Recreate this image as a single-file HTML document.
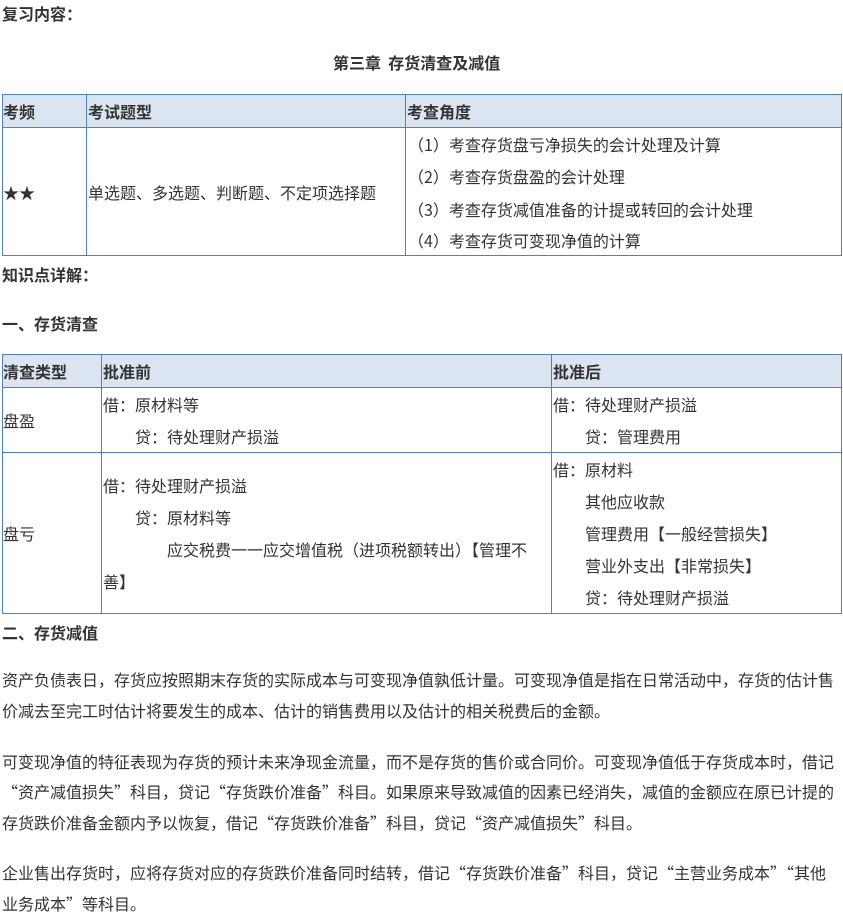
<!DOCTYPE html>
<html><head><meta charset="utf-8"><style>
body{margin:0;width:843px;height:916px;background:#fff;font-family:"Noto Sans CJK SC","Liberation Sans",sans-serif;font-size:16px;color:#333;position:relative;overflow:hidden}
.t{position:absolute;white-space:nowrap;line-height:20px}
.b{font-weight:bold}
.ln{position:absolute;background:#4f81bd}
.hd{position:absolute;background:#dbe5f1}
</style></head><body>
<div class="t b" style="left:2px;top:3px">复习内容：</div>
<div class="t b" style="left:333px;top:52px">第三章&nbsp;&nbsp;存货清查及减值</div>

<div class="hd" style="left:2px;top:94px;width:839px;height:33px"></div>
<div class="ln" style="left:2px;top:94px;width:839px;height:1px"></div>
<div class="ln" style="left:2px;top:127px;width:839px;height:1px"></div>
<div class="ln" style="left:2px;top:255px;width:839px;height:1px"></div>
<div class="ln" style="left:2px;top:94px;width:1px;height:162px"></div>
<div class="ln" style="left:86px;top:94px;width:1px;height:162px"></div>
<div class="ln" style="left:405px;top:94px;width:1px;height:162px"></div>
<div class="ln" style="left:841px;top:94px;width:1px;height:162px"></div>
<div class="t b" style="left:3px;top:101px">考频</div>
<div class="t b" style="left:88px;top:101px">考试题型</div>
<div class="t b" style="left:407px;top:101px">考查角度</div>
<div class="t" style="left:3px;top:182px">★★</div>
<div class="t" style="left:88px;top:182px">单选题、多选题、判断题、不定项选择题</div>
<div class="t" style="left:408px;top:134px">（1）考查存货盘亏净损失的会计处理及计算</div>
<div class="t" style="left:408px;top:166px">（2）考查存货盘盈的会计处理</div>
<div class="t" style="left:408px;top:199px">（3）考查存货减值准备的计提或转回的会计处理</div>
<div class="t" style="left:408px;top:230px">（4）考查存货可变现净值的计算</div>

<div class="t b" style="left:2px;top:264px">知识点详解：</div>
<div class="t b" style="left:2px;top:313px">一、存货清查</div>

<div class="hd" style="left:2px;top:354px;width:839px;height:33px"></div>
<div class="ln" style="left:2px;top:354px;width:839px;height:1px"></div>
<div class="ln" style="left:2px;top:387px;width:839px;height:1px"></div>
<div class="ln" style="left:2px;top:452px;width:839px;height:1px"></div>
<div class="ln" style="left:2px;top:613px;width:839px;height:1px"></div>
<div class="ln" style="left:2px;top:354px;width:1px;height:260px"></div>
<div class="ln" style="left:101px;top:354px;width:1px;height:260px"></div>
<div class="ln" style="left:551px;top:354px;width:1px;height:260px"></div>
<div class="ln" style="left:841px;top:354px;width:1px;height:260px"></div>
<div class="t b" style="left:3px;top:361px">清查类型</div>
<div class="t b" style="left:103px;top:361px">批准前</div>
<div class="t b" style="left:553px;top:361px">批准后</div>
<div class="t" style="left:3px;top:410px">盘盈</div>
<div class="t" style="left:103px;top:394px">借：原材料等</div>
<div class="t" style="left:135px;top:426px">贷：待处理财产损溢</div>
<div class="t" style="left:553px;top:394px">借：待处理财产损溢</div>
<div class="t" style="left:585px;top:426px">贷：管理费用</div>
<div class="t" style="left:3px;top:523px">盘亏</div>
<div class="t" style="left:103px;top:475px">借：待处理财产损溢</div>
<div class="t" style="left:135px;top:507px">贷：原材料等</div>
<div class="t" style="left:167px;top:539px">应交税费一一应交增值税（进项税额转出）【管理不</div>
<div class="t" style="left:103px;top:571px">善】</div>
<div class="t" style="left:553px;top:459px">借：原材料</div>
<div class="t" style="left:585px;top:491px">其他应收款</div>
<div class="t" style="left:585px;top:523px">管理费用【一般经营损失】</div>
<div class="t" style="left:585px;top:555px">营业外支出【非常损失】</div>
<div class="t" style="left:585px;top:587px">贷：待处理财产损溢</div>

<div class="t b" style="left:2px;top:622px">二、存货减值</div>
<div class="t" style="left:2px;top:669px">资产负债表日，存货应按照期末存货的实际成本与可变现净值孰低计量。可变现净值是指在日常活动中，存货的估计售</div>
<div class="t" style="left:2px;top:700px">价减去至完工时估计将要发生的成本、估计的销售费用以及估计的相关税费后的金额。</div>
<div class="t" style="left:2px;top:751px">可变现净值的特征表现为存货的预计未来净现金流量，而不是存货的售价或合同价。可变现净值低于存货成本时，借记</div>
<div class="t" style="left:2px;top:781px">“资产减值损失”科目，贷记“存货跌价准备”科目。如果原来导致减值的因素已经消失，减值的金额应在原已计提的</div>
<div class="t" style="left:2px;top:812px">存货跌价准备金额内予以恢复，借记“存货跌价准备”科目，贷记“资产减值损失”科目。</div>
<div class="t" style="left:2px;top:862px">企业售出存货时，应将存货对应的存货跌价准备同时结转，借记“存货跌价准备”科目，贷记“主营业务成本”“其他</div>
<div class="t" style="left:2px;top:893px">业务成本”等科目。</div>
</body></html>
